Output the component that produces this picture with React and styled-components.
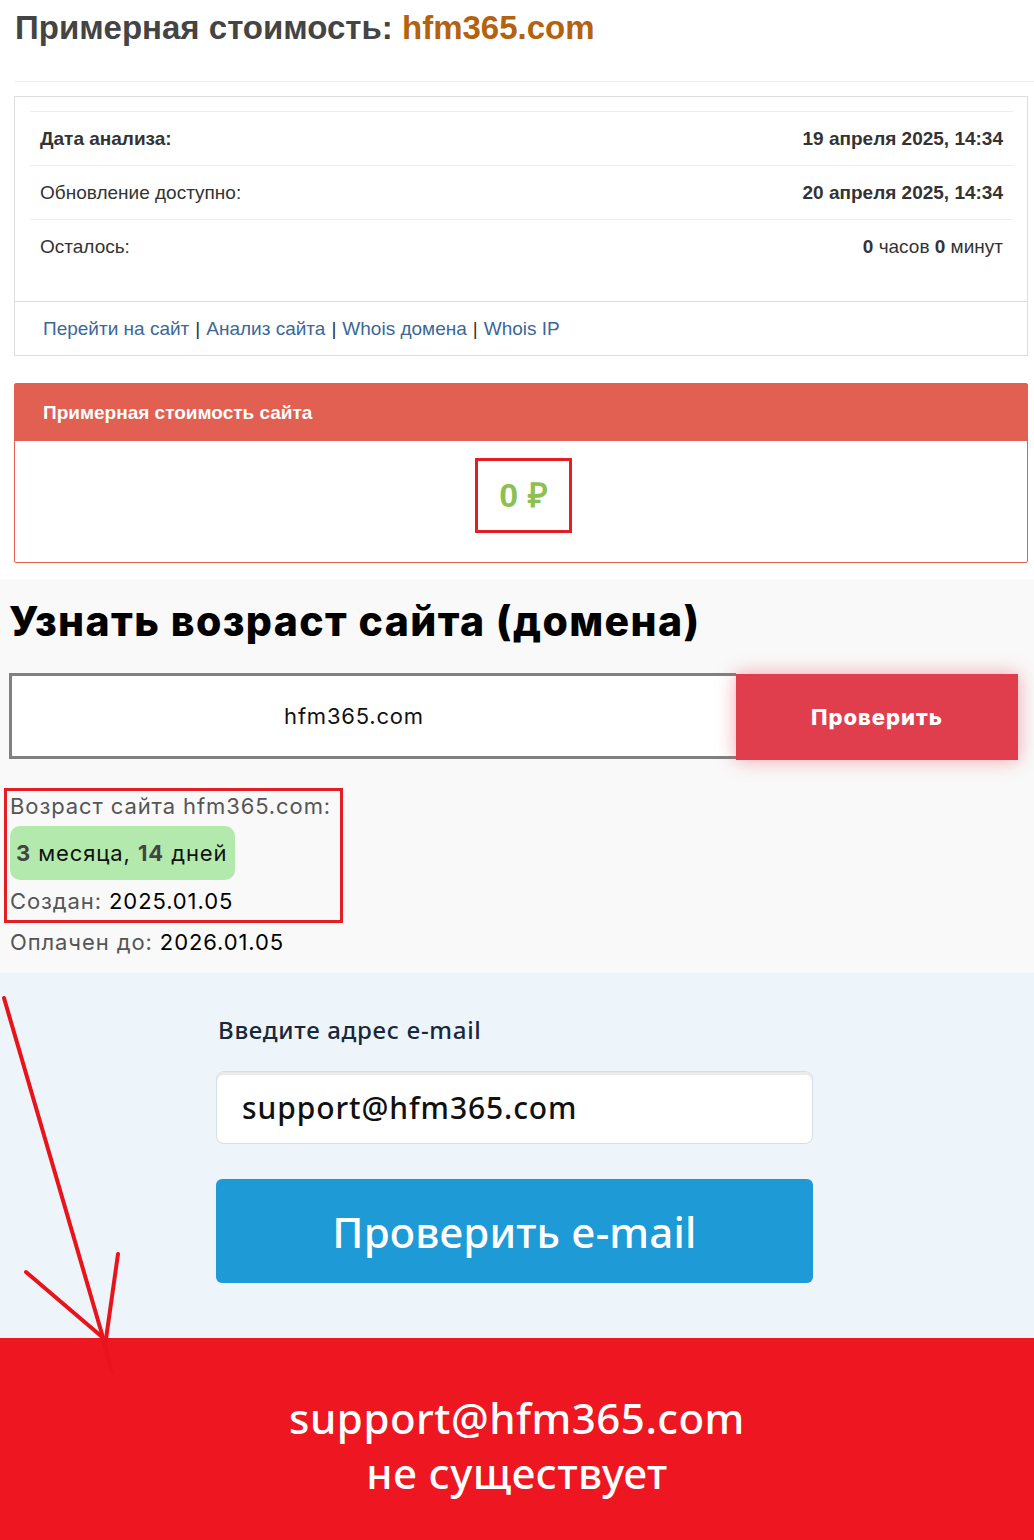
import React from "react";
import styled, { createGlobalStyle } from "styled-components";

const GlobalStyle = createGlobalStyle`
  html, body {
    margin: 0;
    padding: 0;
    background: #ffffff;
  }
  * {
    box-sizing: border-box;
  }
`;

const rows = [
  { label: "Дата анализа:", strongLabel: true, value: <b>19 апреля 2025, 14:34</b> },
  { label: "Обновление доступно:", value: <b>20 апреля 2025, 14:34</b> },
  {
    label: "Осталось:",
    value: (
      <>
        <b>0</b> часов <b>0</b> минут
      </>
    ),
  },
];

const links = ["Перейти на сайт", "Анализ сайта", "Whois домена", "Whois IP"];

const Arrow = () => (
  <ArrowSvg width="140" height="400" viewBox="0 0 140 400">
    <path d="M4 2 L104 345" stroke="#e8141c" strokeWidth="4" fill="none" strokeLinecap="round" />
    <path d="M104 345 L112 378" stroke="#e8141c" strokeWidth="4" fill="none" opacity="0.55" />
    <path d="M26 276 L101 340" stroke="#e8141c" strokeWidth="4" fill="none" strokeLinecap="round" />
    <path d="M118 258 L105 350" stroke="#e8141c" strokeWidth="4" fill="none" strokeLinecap="round" />
  </ArrowSvg>
);

const App = () => {
  return (
    <Page>
      <GlobalStyle />

      <PriceSection>
        <Title>
          Примерная стоимость: <Domain>hfm365.com</Domain>
        </Title>
        <Divider />

        <InfoCard>
          <InfoBody>
            {rows.map((row) => (
              <InfoRow key={row.label}>
                <InfoLabel strong={row.strongLabel}>{row.label}</InfoLabel>
                <InfoValue>{row.value}</InfoValue>
              </InfoRow>
            ))}
          </InfoBody>
          <InfoFooter>
            {links.map((link, index) => (
              <React.Fragment key={link}>
                {index > 0 && <Pipe>|</Pipe>}
                <FooterLink href="#">{link}</FooterLink>
              </React.Fragment>
            ))}
          </InfoFooter>
        </InfoCard>

        <CostCard>
          <CostHeader>Примерная стоимость сайта</CostHeader>
          <CostBody>
            <CostMark>0 ₽</CostMark>
          </CostBody>
        </CostCard>
      </PriceSection>

      <AgeSection>
        <AgeTitle>Узнать возраст сайта (домена)</AgeTitle>
        <SearchRow>
          <DomainInput defaultValue="hfm365.com" />
          <CheckButton>Проверить</CheckButton>
        </SearchRow>

        <Marked>
          <AgeLine>Возраст сайта hfm365.com:</AgeLine>
          <AgeBadge>
            <b>3</b> месяца, <b>14</b> дней
          </AgeBadge>
          <AgeLine tall>
            Создан: <Dark>2025.01.05</Dark>
          </AgeLine>
        </Marked>
        <AgeLine tall offset>
          Оплачен до: <Dark>2026.01.05</Dark>
        </AgeLine>
      </AgeSection>

      <EmailSection>
        <EmailForm>
          <EmailLabel>Введите адрес e-mail</EmailLabel>
          <EmailInput defaultValue="support@hfm365.com" />
          <EmailButton>Проверить e-mail</EmailButton>
        </EmailForm>
      </EmailSection>

      <Verdict>
        <VerdictLine>support@hfm365.com</VerdictLine>
        <VerdictLine>не существует</VerdictLine>
      </Verdict>

      <Arrow />
    </Page>
  );
};

export default App;

const Page = styled.div`
  position: relative;
  width: 1034px;
  overflow: hidden;
`;

const PriceSection = styled.section`
  padding: 9px 6px 16px 14px;
  background: #ffffff;
  font-family: "Liberation Sans", Arial, sans-serif;
`;

const Title = styled.h1`
  margin: 0 0 0 1px;
  font-size: 33px;
  line-height: 38px;
  font-weight: 700;
  color: #444444;
`;

const Domain = styled.span`
  color: #b5620e;
`;

const Divider = styled.div`
  height: 1px;
  background: #eeeeee;
  margin: 34px -6px 14px 1px;
`;

const InfoCard = styled.div`
  border: 1px solid #dddddd;
  background: #ffffff;
`;

const InfoBody = styled.div`
  padding: 14px 14px 28px 15px;
`;

const InfoRow = styled.div`
  display: flex;
  justify-content: space-between;
  align-items: center;
  height: 54px;
  padding: 0 10px;
  border-top: 1px solid #eeeeee;
  font-size: 19px;
  color: #333333;
`;

const InfoLabel = styled.span`
  font-weight: ${({ strong }) => (strong ? 700 : 400)};
`;

const InfoValue = styled.span`
  color: #333333;
`;

const InfoFooter = styled.div`
  display: flex;
  align-items: center;
  height: 54px;
  padding: 0 28px;
  border-top: 1px solid #dddddd;
  font-size: 19px;
  color: #333333;
`;

const FooterLink = styled.a`
  color: #3a6898;
  text-decoration: none;
`;

const Pipe = styled.span`
  margin: 0 6px;
`;

const CostCard = styled.div`
  margin-top: 27px;
  border: 1px solid #e26051;
  border-radius: 2px;
`;

const CostHeader = styled.div`
  display: flex;
  align-items: center;
  height: 57px;
  padding-left: 28px;
  background: #e26051;
  color: #ffffff;
  font-size: 19px;
  font-weight: 700;
`;

const CostBody = styled.div`
  display: flex;
  justify-content: center;
  padding: 17px 0 29px;
`;

const CostMark = styled.div`
  display: flex;
  align-items: center;
  justify-content: center;
  width: 97px;
  height: 75px;
  margin-left: 5px;
  padding-bottom: 4px;
  border: 3px solid #e31e24;
  color: #8cc152;
  font-size: 34px;
  font-weight: 700;
`;

const AgeSection = styled.section`
  padding: 18px 16px 10px 9px;
  background: #f9f9f9;
  font-family: Inter, "Open Sans", sans-serif;
`;

const AgeTitle = styled.h2`
  margin: 0 0 28px 0;
  font-size: 41px;
  line-height: 48px;
  font-weight: 800;
  color: #000000;
  letter-spacing: 1.4px;
`;

const SearchRow = styled.div`
  display: flex;
  align-items: flex-start;
  height: 87px;
`;

const DomainInput = styled.input`
  width: 727px;
  height: 86px;
  border: 3px solid #808080;
  border-right: none;
  background: #ffffff;
  font-family: Inter, sans-serif;
  font-size: 22px;
  letter-spacing: 0.8px;
  color: #111111;
  text-align: center;
  padding: 0 40px 0 0;
  outline: none;
`;

const CheckButton = styled.button`
  width: 282px;
  height: 86px;
  margin-top: 1px;
  border: none;
  background: #e03e4d;
  color: #ffffff;
  font-family: Inter, sans-serif;
  font-size: 22px;
  font-weight: 800;
  letter-spacing: 1px;
  box-shadow: 0 0 18px rgba(230, 60, 75, 0.45);
`;

const Marked = styled.div`
  width: 339px;
  margin: 28px 0 0 -5px;
  padding: 0 0 0 3px;
  border: 3px solid #e31e24;
`;

const AgeLine = styled.div`
  font-size: 22px;
  letter-spacing: 0.9px;
  line-height: ${({ tall }) => (tall ? "38px" : "31px")};
  padding-top: ${({ tall, offset }) => (tall && !offset ? "2px" : "0")};
  color: #555555;
  padding-left: ${({ offset }) => (offset ? "1px" : "0")};
  ${({ offset }) => offset && "line-height: 42px; margin-top: -2px;"}
`;

const Dark = styled.span`
  color: #000000;
`;

const AgeBadge = styled.div`
  display: inline-block;
  height: 54px;
  line-height: 54px;
  margin-top: 4px;
  padding: 0 8px 0 6px;
  border-radius: 10px;
  background: #b3e9ad;
  font-size: 22px;
  letter-spacing: 0.9px;
  color: #111111;

  b {
    color: #444444;
    font-weight: 700;
  }
`;

const EmailSection = styled.section`
  padding: 42px 0 55px 216px;
  background: #eef5fa;
  font-family: "Noto Sans", "Open Sans", sans-serif;
`;

const EmailForm = styled.div`
  display: flex;
  flex-direction: column;
  width: 597px;
`;

const EmailLabel = styled.div`
  padding-left: 2px;
  font-size: 24px;
  line-height: 30px;
  font-weight: 500;
  color: #16283a;
  letter-spacing: 0.7px;
`;

const EmailInput = styled.input`
  height: 73px;
  margin-top: 26px;
  padding: 0 0 0 25px;
  border: 1px solid #d8dde2;
  border-radius: 8px;
  background: #ffffff;
  box-shadow: inset 0 3px 0 rgba(0, 0, 0, 0.08);
  font-family: "Noto Sans", sans-serif;
  font-size: 30px;
  font-weight: 500;
  letter-spacing: 0.9px;
  color: #111111;
  outline: none;
`;

const EmailButton = styled.button`
  height: 104px;
  margin-top: 35px;
  border: none;
  border-radius: 6px;
  background: #1e9ad6;
  color: #ffffff;
  font-family: "Noto Sans", sans-serif;
  font-size: 42px;
  font-weight: 500;
  letter-spacing: 0.2px;
`;

const Verdict = styled.section`
  height: 202px;
  padding-top: 52px;
  background: #ee1620;
  font-family: "Noto Sans", sans-serif;
  text-align: center;
  color: #ffffff;
`;

const VerdictLine = styled.div`
  font-size: 42px;
  line-height: 55px;
  font-weight: 500;
  letter-spacing: 0.5px;
`;

const ArrowSvg = styled.svg`
  position: absolute;
  left: 0;
  top: 996px;
  pointer-events: none;
`;
